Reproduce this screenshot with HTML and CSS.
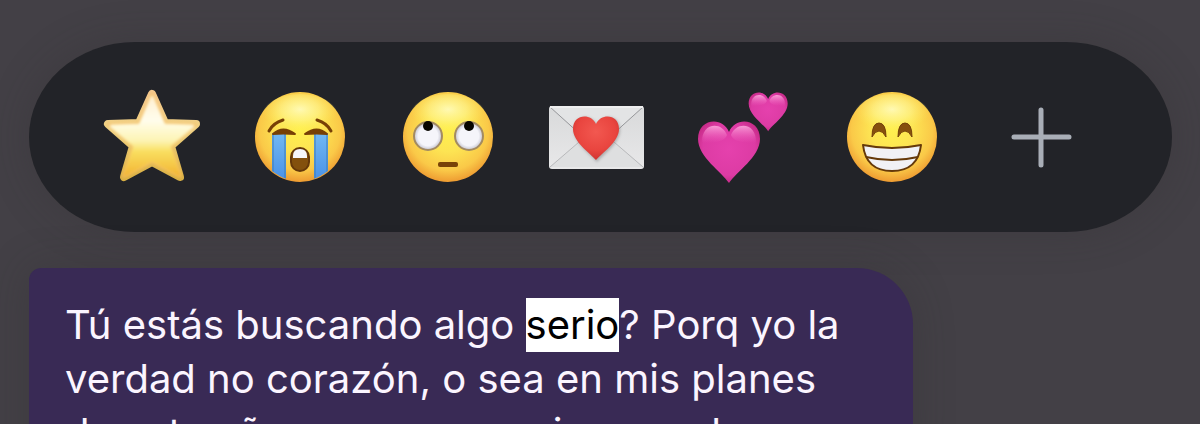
FILE: index.html
```html
<!DOCTYPE html>
<html lang="es">
  <head>
    <meta charset="UTF-8" />
    <meta name="viewport" content="width=device-width, initial-scale=1.0" />
    <title>Reacciones</title>
    <link rel="stylesheet" href="styles.css">
  </head>
  <body>
    <main class="chat">
      <div class="reactions">
        <button class="reaction" type="button" aria-label="Estrella">
          <svg viewBox="0 0 96 96">
            <defs>
              <linearGradient id="starFill" x1="0" y1="0" x2="0" y2="1">
                <stop offset="0" stop-color="#fff0d2" />
                <stop offset="0.3" stop-color="#fffdec" />
                <stop offset="0.56" stop-color="#fdf4b4" />
                <stop offset="0.7" stop-color="#f9de5e" />
                <stop offset="1" stop-color="#f2b636" />
              </linearGradient>
              <linearGradient id="starEdge" x1="0" y1="0" x2="0" y2="1">
                <stop offset="0" stop-color="#f3c68c" />
                <stop offset="0.4" stop-color="#f0d284" />
                <stop offset="1" stop-color="#d9b044" />
              </linearGradient>
              <filter id="soft" x="-20%" y="-20%" width="140%" height="140%">
                <feGaussianBlur stdDeviation="1.5" />
              </filter>
            </defs>
            <path d="M48 5L61 34L92 35L67 57L76 88L48 73L20 88L29 57L4 35L35 34Z" fill="url(#starEdge)" stroke="url(#starEdge)" stroke-width="8" stroke-linejoin="round" />
            <path d="M48 6L61 35L91 36L66 57L76 87L48 72L20 87L30 57L5 36L35 35Z" fill="#f9d070" stroke="#f5bd62" stroke-width="3" stroke-linejoin="round" filter="url(#soft)" />
            <path d="M48 8L60 36L89 37L65 57L75 86L48 71L21 86L31 57L7 37L36 36Z" fill="url(#starFill)" stroke="url(#starFill)" stroke-width="3" stroke-linejoin="round" filter="url(#soft)" />
          </svg>
        </button>
        <button class="reaction" type="button" aria-label="Llorando">
          <svg viewBox="0 0 96 96">
            <defs>
              <radialGradient id="face" cx="0.5" cy="0.42" r="0.6">
                <stop offset="0" stop-color="#fff04e" />
                <stop offset="0.4" stop-color="#fde453" />
                <stop offset="0.75" stop-color="#fac948" />
                <stop offset="1" stop-color="#ec942e" />
              </radialGradient>
              <radialGradient id="faceShine" cx="0.5" cy="0.35" r="0.5">
                <stop offset="0" stop-color="#fffbbe" stop-opacity="0.9" />
                <stop offset="0.5" stop-color="#fff89a" stop-opacity="0.55" />
                <stop offset="1" stop-color="#fff260" stop-opacity="0" />
              </radialGradient>
              <linearGradient id="tear" x1="0" y1="0" x2="0" y2="1">
                <stop offset="0" stop-color="#72b8f3" />
                <stop offset="1" stop-color="#478fe6" />
              </linearGradient>
              <clipPath id="faceClip"><circle cx="48" cy="48" r="44" /></clipPath>
            </defs>
            <circle cx="48" cy="48" r="45" fill="url(#face)" />
            <ellipse cx="48" cy="27" rx="38" ry="22" fill="url(#faceShine)" />
            <g clip-path="url(#faceClip)">
              <path d="M20 44h14v50H20zM62 44h14v50H62z" fill="url(#tear)" />
              <path d="M21 45v48M33 45v48M63 45v48M75 45v48" stroke="#3f7db7" stroke-width="1" fill="none" />
            </g>
            <g fill="none" stroke="#774006" stroke-width="3" stroke-linecap="round">
              <path d="M17 42Q21 34 31 31" />
              <path d="M79 42Q75 34 65 31" />
            </g>
            <path d="M21 45Q31 36 43 45Q31 44 21 45ZM75 45Q65 36 53 45Q65 44 75 45Z" fill="#774006" stroke="#774006" stroke-width="2" stroke-linejoin="round" />
            <rect x="39" y="59" width="18" height="23" rx="9" fill="#83500d" stroke="#65380a" stroke-width="2" />
            <path d="M41 69V67Q41 60 48 60T55 67V69Z" fill="#f7f7fa" />
          </svg>
        </button>
        <button class="reaction" type="button" aria-label="Ojos en blanco">
          <svg viewBox="0 0 96 96">
            <defs>
              <radialGradient id="eye" cx="0.5" cy="0.5" r="0.5">
                <stop offset="0.7" stop-color="#f5f5fa" />
                <stop offset="1" stop-color="#c3c3cf" />
              </radialGradient>
            </defs>
            <circle cx="48" cy="48" r="45" fill="url(#face)" />
            <ellipse cx="48" cy="27" rx="38" ry="22" fill="url(#faceShine)" />
            <circle cx="28" cy="47" r="14" fill="url(#eye)" stroke="#a38b62" stroke-width="2" />
            <circle cx="69" cy="47" r="14" fill="url(#eye)" stroke="#a38b62" stroke-width="2" />
            <circle cx="28" cy="37" r="5" fill="#080600" />
            <circle cx="69" cy="37" r="5" fill="#080600" />
            <rect x="38" y="73" width="20" height="5" rx="2" fill="#794308" />
          </svg>
        </button>
        <button class="reaction" type="button" aria-label="Carta de amor">
          <svg viewBox="0 0 96 96">
            <defs>
              <linearGradient id="paper" x1="0" y1="0" x2="0" y2="1">
                <stop offset="0" stop-color="#d8d9da" />
                <stop offset="1" stop-color="#e8e8e9" />
              </linearGradient>
              <radialGradient id="redHeart" cx="0.5" cy="0.35" r="0.65">
                <stop offset="0" stop-color="#f25850" />
                <stop offset="0.65" stop-color="#e9453f" />
                <stop offset="1" stop-color="#cf3330" />
              </radialGradient>
            </defs>
            <rect x="1" y="17" width="95" height="63" rx="3" fill="url(#paper)" />
            <path d="M2 78L38 47H59L95 78" fill="#dedfe0" stroke="#b8b9bb" stroke-width="1" />
            <path d="M2 18L43 55Q48 59 54 55L95 18" fill="#e3e4e5" stroke="#96979a" stroke-width="1" />
            <path d="M2 18H95" stroke="#eeeeef" stroke-width="2" />
            <path d="M49 73C43 66 26 54 26 41C26 25 44 25 49 36C54 25 72 25 72 41C72 54 55 66 49 73Z" fill="#777" opacity="0.5" filter="url(#soft)" />
            <path d="M48 71C42 64 25 53 25 40C25 25 43 24 48 35C53 24 71 25 71 40C71 53 54 64 48 71Z" fill="url(#redHeart)" />
          </svg>
        </button>
        <button class="reaction" type="button" aria-label="Dos corazones">
          <svg viewBox="0 0 96 96">
            <defs>
              <radialGradient id="pinkHeart" cx="0.5" cy="0.45" r="0.6">
                <stop offset="0" stop-color="#e541ad" />
                <stop offset="0.7" stop-color="#dd3ba4" />
                <stop offset="1" stop-color="#c12680" />
              </radialGradient>
              <linearGradient id="pinkShine" x1="0" y1="0" x2="0" y2="1">
                <stop offset="0" stop-color="#ffb4e2" stop-opacity="0.8" />
                <stop offset="1" stop-color="#f368c4" stop-opacity="0" />
              </linearGradient>
              <g id="loveHeart">
                <path d="M32 94C25 83 1 68 1 50C1 29 26 27 32 43C38 27 63 29 63 50C63 68 39 83 32 94Z" fill="url(#pinkHeart)" />
                <path d="M5 54C4 33 25 32 30 46C27 54 13 54 5 54ZM59 54C60 33 39 32 34 46C37 54 51 54 59 54Z" fill="url(#pinkShine)" />
              </g>
            </defs>
            <use href="#loveHeart" />
            <use href="#loveHeart" transform="translate(51 -17) scale(.63)" />
          </svg>
        </button>
        <button class="reaction" type="button" aria-label="Sonrisa radiante">
          <svg viewBox="0 0 96 96">
            <circle cx="47" cy="48" r="45" fill="url(#face)" />
            <ellipse cx="47" cy="27" rx="38" ry="22" fill="url(#faceShine)" />
            <path d="M27 48Q27 34 34 34T41 48Q38 42 34 42T27 48ZM53 48Q53 34 60 34T67 48Q64 42 60 42T53 48Z" fill="#86500e" stroke="#74420a" stroke-width="1" stroke-linejoin="round" />
            <path d="M18 56Q47 62 76 56Q73 82 47 82T18 56Z" fill="#f1f1f5" stroke="#65390a" stroke-width="2" stroke-linejoin="round" />
            <path d="M21 68Q47 74 73 68" fill="none" stroke="#65390a" stroke-width="2" />
          </svg>
        </button>
        <button class="reaction" type="button" aria-label="Más reacciones">
          <svg viewBox="0 0 96 96">
            <path d="M48 21V76M21 48H76" fill="none" stroke="#a9aeb7" stroke-width="5" stroke-linecap="round" />
          </svg>
        </button>
      </div>

      <p class="message">
        Tú estás buscando algo <mark>serio</mark>? Porq yo la verdad no corazón, o sea en mis planes de este año no a conseguir amor de
      </p>
    </main>
  </body>
</html>
```
FILE: styles.css
```css
* {
  box-sizing: border-box;
}
body {
  margin: 0;
  height: 100vh;
  overflow: hidden;
  background-color: #434046;
  font-family: "Inter", sans-serif;
}
.chat {
  display: flex;
  flex-direction: column;
  align-items: flex-start;
  gap: 36px;
  padding: 42px 28px 0 29px;
}
.reactions {
  display: flex;
  justify-content: space-between;
  width: 100%;
  padding: 47px 83px 47px 75px;
  border-radius: 106px / 95px;
  background-color: #222328;
  box-shadow: 0 0 40px rgba(50, 47, 50, 0.3);
}
.reaction {
  width: 96px;
  height: 96px;
  padding: 0;
  border: none;
  background: none;
  cursor: pointer;
}
.reaction svg {
  display: block;
  width: 100%;
  overflow: visible;
}
.message {
  max-width: 884px;
  margin: 0;
  padding: 30px 56px 30px 36px;
  border-radius: 12px 56px 56px 12px;
  background-color: #392a55;
  box-shadow: 0 0 40px rgba(50, 47, 50, 0.3);
  color: #fbf5ff;
  font-size: 40px;
  line-height: 54px;
}
.message mark {
  display: inline-block;
  background-color: #fff;
  color: #000;
}
```
